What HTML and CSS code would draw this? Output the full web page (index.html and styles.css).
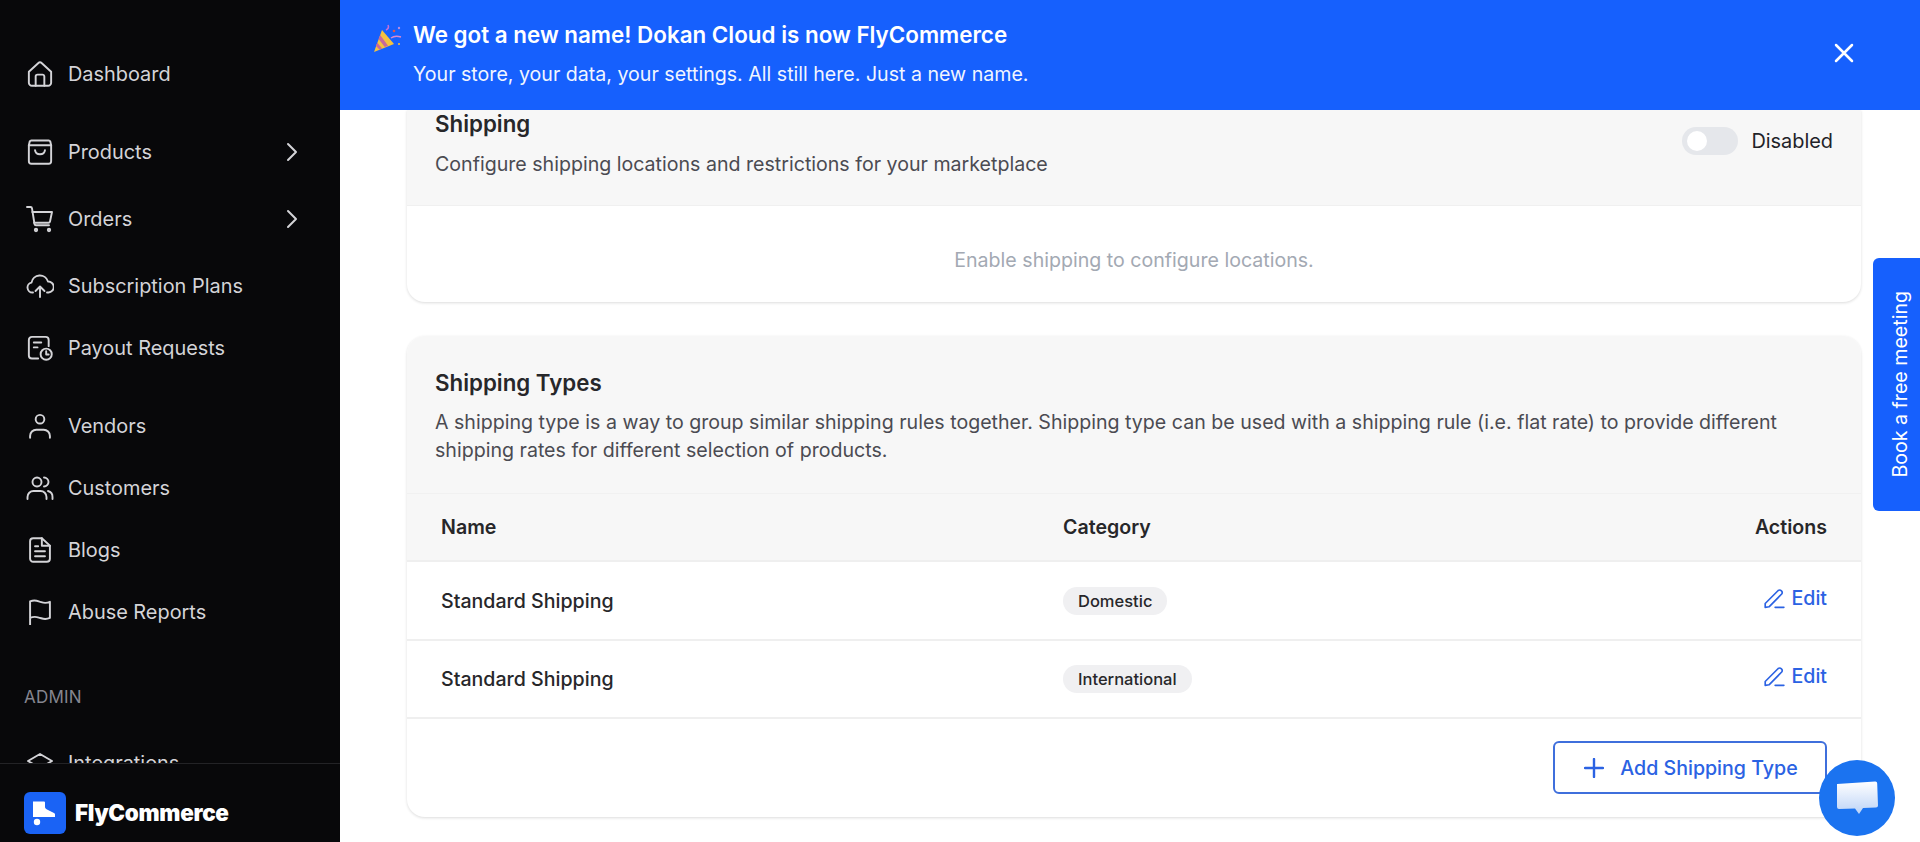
FILE: index.html
```html
<!DOCTYPE html>
<html lang="en">
<head>
<meta charset="utf-8">
<title>Shipping settings</title>
<link rel="stylesheet" href="styles.css">
</head>
<body>
<div class="app">
  <aside class="sidebar">
    <nav class="nav">
      <div class="nav-group">
        <a class="nav-item"><svg class="nav-icon" viewBox="1.5 1.500 21 21"><path d="M3 10.200 10.500 3.300a2.200 2.200 0 0 1 3 0L21 10.200V19a2.500 2.500 0 0 1-2.500 2.500h-13A2.500 2.500 0 0 1 3 19z"/><path d="M8.500 21.500V14a1.500 1.500 0 0 1 1.500-1.500h4a1.500 1.500 0 0 1 1.500 1.500v7.500"/></svg><span>Dashboard</span></a>
      </div>
      <div class="nav-group">
        <a class="nav-item nav-item--loose"><svg class="nav-icon" viewBox="1.5 1.500 21 21"><path d="M5 2.700h14a1.500 1.500 0 0 1 1.300.8L21 6.500v13a2 2 0 0 1-2 2H5a2 2 0 0 1-2-2v-13l.7-3a1.500 1.500 0 0 1 1.300-.8z"/><path d="M3 6.500h18"/><path d="M8 10.500c.5 4.500 7.500 4.500 8 0"/></svg><span>Products</span><svg class="chev" viewBox="0 0 24 24"><path d="m8 4 8 8-8 8"/></svg></a>
        <a class="nav-item nav-item--loose"><svg class="nav-icon nav-icon--wide" viewBox="0 0 28 28"><path d="M1 2h3.500a1.500 1.500 0 0 1 1.500 1.300L8.500 19a1.500 1.500 0 0 0 1.500 1.200h13"/><path d="M6.300 7H26l-2 9.500a1.500 1.500 0 0 1-1.500 1.200H8.100"/><circle cx="10" cy="25" r="1.200"/><circle cx="23" cy="25" r="1.200"/></svg><span>Orders</span><svg class="chev" viewBox="0 0 24 24"><path d="m8 4 8 8-8 8"/></svg></a>
        <a class="nav-item"><svg class="nav-icon nav-icon--wide" viewBox="0 0 28 28"><path d="M7 20.500H6.500A5 5 0 0 1 5.500 10.600 8.500 8.500 0 0 1 22 9.500a5.500 5.500 0 0 1 .5 11H21"/><path d="M14 25V14.500m-4.500 4.500 4.500-4.500 4.500 4.500"/></svg><span>Subscription Plans</span></a>
        <a class="nav-item"><svg class="nav-icon" viewBox="1.5 1.500 21 21"><path d="M10.500 20.500H5.500a2.500 2.500 0 0 1-2.500-2.500V5.500A2.500 2.500 0 0 1 5.500 3h11A2.500 2.500 0 0 1 19 5.500v5"/><path d="M7 7.500h6M7 11.500h3"/><circle cx="17" cy="17" r="4.500"/><path d="M17 14.500v2.800h2"/></svg><span>Payout Requests</span></a>
      </div>
      <div class="nav-group">
        <a class="nav-item"><svg class="nav-icon" viewBox="1.5 1.500 21 21"><circle cx="12" cy="6.500" r="3.500"/><path d="M4 21.500V20a5 5 0 0 1 5-5h6a5 5 0 0 1 5 5v1.500"/></svg><span>Vendors</span></a>
        <a class="nav-item"><svg class="nav-icon nav-icon--wide" viewBox="0 0 28 28"><circle cx="11" cy="8" r="4.500"/><path d="M1.500 25v-2a6 6 0 0 1 6-6h7a6 6 0 0 1 6 6v2"/><path d="M18 3.500a4.500 4.500 0 0 1 0 9"/><path d="M22 17a6 6 0 0 1 4.500 6v2"/></svg><span>Customers</span></a>
        <a class="nav-item"><svg class="nav-icon" viewBox="1.5 1.500 21 21"><path d="M13.500 2.500H6.500A2.500 2.500 0 0 0 4 5v14a2.500 2.500 0 0 0 2.500 2.500h11A2.500 2.500 0 0 0 20 19V8.500z"/><path d="M13.500 2.500v6H20"/><path d="M8 9h2.500M8 13h8M8 17h8"/></svg><span>Blogs</span></a>
        <a class="nav-item"><svg class="nav-icon" viewBox="1.5 1.500 21 21"><path d="M4 22.500V3.500c4.500-2 7 .3 8 .3s3.500 2 8 0v13c-4.500 2-7 0-8 0s-3.500-2-8 0"/></svg><span>Abuse Reports</span></a>
      </div>
      <div class="nav-label">ADMIN</div>
      <a class="nav-item"><svg class="nav-icon nav-icon--wide" viewBox="0 0 28 28"><path d="m14 5 12 7-12 7-12-7z"/><path d="m2 17 12 7 12-7"/></svg><span>Integrations</span></a>
    </nav>
    <div class="brand">
      <svg class="brand-mark" viewBox="0 0 42 42"><rect width="42" height="42" rx="6" fill="#1a63f5"/><path d="M9 9.500h11a1 1 0 0 1 1 1V15c0 1 1 2 2 2.500l7 3.500c1 .5 1 1 1 2v2H9z" fill="#fff"/><circle cx="13" cy="30" r="3.200" fill="#fff"/></svg>
      <span class="brand-name">FlyCommerce</span>
    </div>
  </aside>

  <div class="main">
    <header class="banner">
      <svg class="party" viewBox="0 0 32 32"><path d="M10 7 2 29l20-8z" fill="#f4c23f"/><path d="M8.200 12 16 22.800l-3.200 1.300-6.200-8zM5.200 19.800l5 5.700-2.800 1.100-3.600-3.900z" fill="#c9689b"/><path d="M14 7c2-1 3-3 2-5" stroke="#c76fd8" fill="none" stroke-width="1.500"/><path d="M19 15c4-3 7-2 10-1" stroke="#d98ad0" fill="none" stroke-width="1.500"/><circle cx="22" cy="8" r="1.300" fill="#e0574f"/><circle cx="27" cy="21" r="1" fill="#f4c23f"/><circle cx="27" cy="5" r="1.200" fill="#b78be0"/></svg>
      <div class="banner-text">
        <div class="banner-title">We got a new name! Dokan Cloud is now FlyCommerce</div>
        <div class="banner-sub">Your store, your data, your settings. All still here. Just a new name.</div>
      </div>
      <svg class="banner-close" viewBox="0 0 20 20"><path d="M2 2 18 18M18 2 2 18"/></svg>
    </header>

    <main class="content">
      <section class="card">
        <div class="card-head card-head--top">
          <div>
            <h2 class="card-title">Shipping</h2>
            <p class="card-desc card-desc--top">Configure shipping locations and restrictions for your marketplace</p>
          </div>
          <div class="switch-wrap">
            <span class="switch"><span class="switch-knob"></span></span>
            <span class="switch-label">Disabled</span>
          </div>
        </div>
        <div class="empty">Enable shipping to configure locations.</div>
      </section>

      <section class="card">
        <div class="card-head card-head--types">
          <h2 class="card-title">Shipping Types</h2>
          <p class="card-desc card-desc--types">A shipping type is a way to group similar shipping rules together. Shipping type can be used with a shipping rule (i.e. flat rate) to provide different shipping rates for different selection of products.</p>
        </div>
        <div class="row row--head">
          <div>Name</div><div>Category</div><div class="cell-end">Actions</div>
        </div>
        <div class="row">
          <div>Standard Shipping</div>
          <div><span class="tag">Domestic</span></div>
          <div class="cell-end"><a class="edit"><svg class="edit-icon" viewBox="0 0 20 20"><path d="M2 18.500V15L13.800 3.200a2.300 2.300 0 0 1 3.200 3.200L5.500 18z"/><path d="M11 18.500h8"/></svg>Edit</a></div>
        </div>
        <div class="row">
          <div>Standard Shipping</div>
          <div><span class="tag">International</span></div>
          <div class="cell-end"><a class="edit"><svg class="edit-icon" viewBox="0 0 20 20"><path d="M2 18.500V15L13.800 3.200a2.300 2.300 0 0 1 3.200 3.200L5.500 18z"/><path d="M11 18.500h8"/></svg>Edit</a></div>
        </div>
        <div class="card-foot">
          <button class="add-btn"><svg class="add-icon" viewBox="0 0 20 20"><path d="M10 1v18M1 10h18"/></svg>Add Shipping Type</button>
        </div>
      </section>
    </main>
  </div>
</div>

<a class="meeting-tab"><span>Book a free meeting</span></a>
<button class="chat-btn" aria-label="Chat">
  <svg class="chat-icon" viewBox="0 0 44 38"><defs><linearGradient id="chatfill" x1="0" y1="0" x2="0" y2="1"><stop offset="0" stop-color="#fff"/><stop offset="1" stop-color="#bcd3f7"/></linearGradient></defs><path d="M2 4 40 1.500a2 2 0 0 1 2.200 2l.8 22a2 2 0 0 1-2 2l-13 .5L24 34l-4-5.500-16 .6a2 2 0 0 1-2-2z" fill="url(#chatfill)"/></svg>
</button>
</body>
</html>
```

FILE: styles.css
```css
* { box-sizing: border-box; }
html, body { margin: 0; height: 100%; overflow: hidden; }
body { font-family: "Inter", "Liberation Sans", sans-serif; font-size: 19.6px; color: #27272a; background: #fff; }
h2, p { margin: 0; }

.app { display: flex; height: 842px; }

.sidebar { width: 340px; flex: none; display: flex; flex-direction: column; background: #08080a; color: #d4d4d8; }
.nav { flex: 1; min-height: 0; overflow: hidden; padding: 49px 24px 0; display: flex; flex-direction: column; }
.nav-group { display: flex; flex-direction: column; gap: 12px; margin-bottom: 28px; flex: none; }
.nav-item { display: flex; align-items: center; height: 50px; flex: none; gap: 15px; padding-left: 3px; font-size: 19.9px; color: #d4d4d8; }
.nav-item--loose { margin-bottom: 5px; }
.nav-icon { width: 26px; height: 26px; flex: none; fill: none; stroke: #d4d4d8; stroke-width: 1.550; stroke-linecap: round; stroke-linejoin: round; }
.nav-icon--wide { width: 28px; height: 28px; margin-left: -1px; margin-right: -1px; stroke-width: 1.900; }
.chev { width: 24px; height: 24px; margin-left: auto; margin-right: 12px; fill: none; stroke: #d4d4d8; stroke-width: 2; stroke-linecap: round; stroke-linejoin: round; }
.nav-label { font-size: 17px; color: #85858f; height: 24px; line-height: 24px; margin: 20px 0 29px; flex: none; letter-spacing: .2px; }

.brand { height: 79px; flex: none; border-top: 1px solid #232326; padding: 28px 24px 0; display: flex; align-items: flex-start; gap: 9px; }
.brand-mark { width: 42px; height: 42px; flex: none; }
.brand-name { font-size: 22.400px; font-weight: 900; color: #fff; line-height: 42px; letter-spacing: -.3px; font-family: "Inter", "Lato", sans-serif; }

.main { flex: 1; min-width: 0; display: flex; flex-direction: column; overflow: hidden; }
.banner { height: 110px; flex: none; background: #1660fd; color: #fff; display: flex; align-items: flex-start; padding: 0 66px 0 32px; }
.party { width: 32px; height: 32px; flex: none; margin: 23px 9px 0 0; }
.banner-text { flex: 1; padding-top: 20px; }
.banner-title { font-size: 22.400px; font-weight: 600; line-height: 30px; }
.banner-sub { font-size: 19.600px; line-height: 26px; margin-top: 11px; color: #f1f5ff; }
.banner-close { width: 20px; height: 20px; flex: none; margin-top: 43px; fill: none; stroke: #fff; stroke-width: 2.500; stroke-linecap: round; }

.content { flex: 1; min-height: 0; overflow: hidden; padding: 0 59px 0 67px; display: flex; flex-direction: column; gap: 34px; }
.card { background: #fff; border-radius: 0 0 18px 18px; box-shadow: 0 1px 3px rgba(0,0,0,.14); overflow: hidden; flex: none; }
.card + .card { border-radius: 18px; }
.card-head { background: #f7f7f7; padding: 0 28px; }
.card-head--top { height: 96px; display: flex; justify-content: space-between; border-bottom: 1px solid #f0f0f0; }
.card-head--types { height: 158px; padding-top: 32px; border-bottom: 1px solid #f1f1f1; }
.card-title { font-size: 22.300px; font-weight: 600; line-height: 30px; color: #27272a; }
.card-head--top .card-title { line-height: 28px; }
.card-desc { font-size: 19.600px; line-height: 28px; color: #4b4b52; }
.card-desc--top { margin-top: 12px; }
.card-desc--types { margin-top: 10px; }

.switch-wrap { display: flex; align-items: center; gap: 13px; height: 62px; }
.switch { width: 56px; height: 28px; border-radius: 14px; background: #e5e7eb; padding: 4px 5px; display: block; }
.switch-knob { display: block; width: 20px; height: 20px; border-radius: 50%; background: #fff; }
.switch-label { font-size: 19.900px; color: #1f2329; }

.empty { height: 96px; padding-top: 12px; display: flex; align-items: center; justify-content: center; color: #a3a9b3; }

.row { display: grid; grid-template-columns: 622px 1fr auto; align-items: center; height: 78.500px; padding: 1px 34px 0; border-bottom: 2px solid #efefef; font-weight: 500; color: #27272a; }
.row--head { height: 68px; padding-top: 0; background: #f7f7f7; font-weight: 600; }
.cell-end { justify-self: end; }
.tag { display: inline-block; height: 28px; line-height: 28px; padding: 0 15px; border-radius: 14px; background: #f0f0f2; font-size: 16.500px; color: #27272a; }
.edit { display: inline-flex; align-items: center; gap: 6px; color: #2b62e3; position: relative; bottom: 1px; }
.edit-icon { width: 22px; height: 22px; fill: none; stroke: #2b62e3; stroke-width: 1.500; stroke-linecap: round; stroke-linejoin: round; }

.card-foot { height: 98px; display: flex; justify-content: flex-end; align-items: flex-start; padding: 22px 34px 0; }
.add-btn { width: 274px; height: 53px; display: flex; align-items: center; justify-content: center; gap: 16px; padding: 0 0 0 2px; border: 2px solid #3f6fdc; border-radius: 6px; background: #fff; color: #2b62e3; font: 500 19.600px "Inter", sans-serif; }
.add-icon { width: 20px; height: 20px; fill: none; stroke: #2b62e3; stroke-width: 2.400; stroke-linecap: round; }

.meeting-tab { position: fixed; right: 0; top: 258px; width: 47px; height: 253px; padding-left: 6px; background: #1660fd; border-radius: 6px 0 0 6px; display: flex; align-items: center; justify-content: center; color: #fff; font-size: 19.600px; }
.meeting-tab span { writing-mode: vertical-rl; transform: rotate(180deg); white-space: nowrap; }

.chat-btn { position: fixed; left: 1819px; top: 760px; width: 76px; height: 76px; border: 0; padding: 0; border-radius: 50%; background: #1b73f0; display: flex; align-items: center; justify-content: center; }
.chat-icon { width: 44px; height: 38px; margin-top: 2px; }
```
